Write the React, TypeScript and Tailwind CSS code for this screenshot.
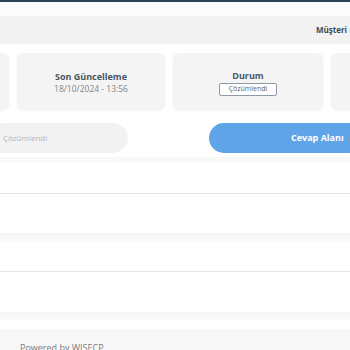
export default function App() {
  const font = { fontFamily: '"Open Sans", "Noto Sans", sans-serif' };

  return (
    <div className="w-[350px] h-[350px] overflow-hidden bg-white" style={font}>
      {/* top bar */}
      <div className="h-[2px] bg-[#2c4256]" />
      <div className="h-[14px] bg-[#fbfbfc]" />

      {/* page header */}
      <div className="h-[28px] bg-[#f2f2f2] flex items-center pl-[316px] whitespace-nowrap">
        <span className="text-[8px] font-bold text-[#3e4a56]">Müşteri Paneli</span>
      </div>

      {/* info cards */}
      <div className="flex gap-2 ml-[-140px] mt-[9px] w-max">
        <div className="shrink-0 w-[149px] h-[57px] rounded-md bg-[#f4f4f4] shadow-[0_1px_3px_rgba(0,0,0,0.05)]" />
        <div className="shrink-0 w-[148px] h-[57px] rounded-md bg-[#f4f4f4] shadow-[0_1px_3px_rgba(0,0,0,0.05)] flex flex-col items-center justify-center pt-[2px]">
          <span className="text-[9px] font-bold text-[#4a5663] leading-[12px]">Son Güncelleme</span>
          <span className="text-[8.5px] text-[#80848a] leading-[12px]">18/10/2024 - 13:56</span>
        </div>
        <div className="shrink-0 w-[150px] h-[57px] rounded-md bg-[#f4f4f4] shadow-[0_1px_3px_rgba(0,0,0,0.05)] flex flex-col items-center justify-center pt-[2px]">
          <span className="text-[9px] font-bold text-[#4a5663] leading-[12px]">Durum</span>
          <span className="mt-[1px] w-[58px] h-[13px] border border-[#8d99a6] rounded-[2px] bg-white text-[7px] text-[#5a6570] flex items-center justify-center">
            Çözümlendi
          </span>
        </div>
        <div className="shrink-0 w-[149px] h-[57px] rounded-md bg-[#f4f4f4] shadow-[0_1px_3px_rgba(0,0,0,0.05)]" />
      </div>

      {/* reply row */}
      <div className="flex items-center mt-[13px] h-[30px] w-max">
        <div className="shrink-0 w-[140px] h-[30px] ml-[-12px] rounded-full bg-[#f2f2f2] flex items-center pl-[15px]">
          <span className="text-[8px] text-[#b4b4b4]">Çözümlendi</span>
        </div>
        <div className="shrink-0 ml-[81px] w-[200px] h-[30px] rounded-full bg-[#5fa3e8] flex items-center pl-[82px] whitespace-nowrap">
          <span className="text-[9px] font-bold text-white">Cevap Alanı</span>
        </div>
      </div>

      <div className="h-[4px]" />
      <div className="h-[6px] bg-gradient-to-b from-[#f8f8f8] to-[#fbfbfb]" />

      {/* message rows */}
      <div className="h-[30px]" />
      <div className="h-[1px] bg-[#e6e6e6]" />
      <div className="h-[39px]" />
      <div className="h-[9px] bg-gradient-to-b from-[#f6f6f6] to-[#fafafa]" />
      <div className="h-[29px]" />
      <div className="h-[1px] bg-[#e6e6e6]" />
      <div className="h-[40px]" />
      <div className="h-[8px] bg-gradient-to-b from-[#f6f6f6] to-[#fafafa]" />
      <div className="h-[10px]" />

      {/* footer */}
      <div className="h-[40px] bg-[#f8f8f8] border-t border-[#f0f0f0] pl-[20px] pt-[11px]">
        <div className="text-[9px] leading-[12px] text-[#7a7a7a] whitespace-nowrap">Powered by WISECP</div>
      </div>
    </div>
  );
}
